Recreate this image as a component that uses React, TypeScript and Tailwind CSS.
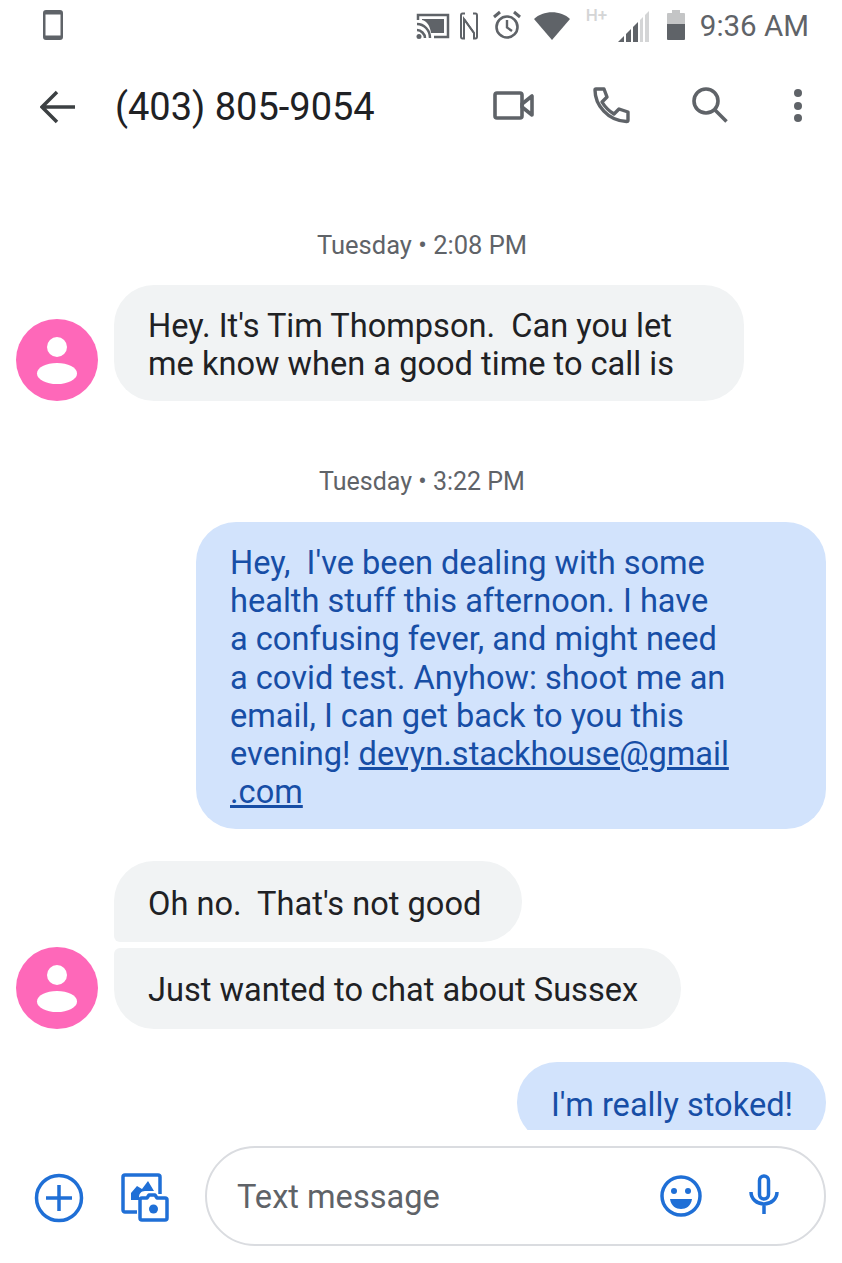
import React from "react";

const Avatar = () => (
  <svg width="82" height="82" viewBox="0 0 82 82" className="shrink-0">
    <circle cx="41" cy="41" r="41" fill="#fe68b9" />
    <circle cx="41" cy="28" r="10" fill="#fff" />
    <ellipse cx="41" cy="54.500" rx="20" ry="10.500" fill="#fff" />
  </svg>
);

const Stamp = ({ children, cls }: { children: React.ReactNode; cls: string }) => (
  <div className={`shrink-0 leading-[30px] text-[#5f6368] whitespace-pre ${cls}`}>{children}</div>
);

export default function App() {
  return (
    <div className="w-[842px] h-[1263px] bg-white flex flex-col overflow-hidden font-['Roboto',sans-serif]">
      {/* Status bar */}
      <div className="h-[50px] shrink-0 flex items-center pl-[43px] pr-[33px] text-[#5f6368]">
        <svg width="20" height="30" viewBox="0 0 20 30">
          <path fillRule="evenodd" d="M3 0h14a3 3 0 0 1 3 3v24a3 3 0 0 1-3 3H3a3 3 0 0 1-3-3V3a3 3 0 0 1 3-3zM2.500 4.500v21h15v-21z" fill="#5f6368" />
        </svg>
        <div className="flex-1" />
        <svg width="34" height="26" viewBox="0 0 34 26" className="mr-[10px] mt-[1px]" fill="none">
          <path d="M2 7V2h30v22H18" stroke="#5f6368" strokeWidth="2.500" />
          <path d="M6 6h22v14H15C14 13 11 8 6 7z" fill="#5f6368" />
          <path d="M1 11c7 0 13 6 13 14M1 17c4 0 8 4 8 8" stroke="#5f6368" strokeWidth="2.500" />
          <circle cx="3" cy="23.500" r="2.500" fill="#5f6368" />
        </svg>
        <svg width="18" height="28" viewBox="0 0 18 28" className="mr-[14px] mt-[1px]" fill="none" stroke="#5f6368" strokeWidth="2">
          <path d="M5 1.500H2.500C1.500 1.500 1 2.500 1 3.500v21c0 1 .5 2 1.500 2H4V7l10 14" />
          <path d="M13 1.500h2.500c1 0 1.500 1 1.500 2v21c0 1-.5 2-1.500 2H14V21L4 7" />
        </svg>
        <svg width="30" height="30" viewBox="0 0 30 30" className="mr-[12px]" fill="none" stroke="#5f6368">
          <circle cx="15" cy="17" r="10.500" strokeWidth="2.600" />
          <path d="M15 10v7.500l5 3.500" strokeWidth="2.400" />
          <path d="M2 7l6-5M28 7l-6-5" strokeWidth="3" />
        </svg>
        <svg width="36" height="29" viewBox="0 0 36 29" className="mr-[16px]">
          <path d="M0 8C9-1 27-1 36 8L18 29z" fill="#5f6368" />
        </svg>
        <span className="text-[17px] leading-[18px] text-[#d4d5d6] font-medium w-[24px] self-start mt-[6px] mr-[8px] whitespace-pre">H+</span>
        <svg width="31" height="31" viewBox="0 0 31 31" className="mr-[18px] mt-[2px]">
          <path d="M0 31L6 25V31z" fill="#5f6368" />
          <path d="M8 23l5-5v13H8z" fill="#5f6368" />
          <path d="M15 16l5-5v20h-5z" fill="#5f6368" />
          <path d="M22 9l3-3v25h-3z" fill="#d4d5d6" />
          <path d="M27 4l4-4v31h-4z" fill="#d4d5d6" />
        </svg>
        <svg width="18" height="30" viewBox="0 0 18 30" className="mr-[15px] mt-[-1px]">
          <path d="M5 0h8v3h4a1 1 0 0 1 1 1v10H0V4a1 1 0 0 1 1-1h4z" fill="#c4c5c6" />
          <path d="M0 14h18v15a1 1 0 0 1-1 1H1a1 1 0 0 1-1-1z" fill="#5f6368" />
        </svg>
        <span className="text-[29.500px] leading-[34px] text-[#5f6368] mt-[1px] whitespace-pre">9:36 AM</span>
      </div>

      {/* App bar */}
      <div className="h-[110px] shrink-0 flex items-center pl-[40px]">
        <svg width="36" height="34" viewBox="0 0 36 34" fill="none" stroke="#3c4043" strokeWidth="3.500" className="mr-[39px] mt-[4px]">
          <path d="M35 17H3M17 2L2 17l15 15" />
        </svg>
        <span className="text-[38px] leading-[44px] text-[#202124] w-[378px] whitespace-pre mt-[4px]">(403) 805-9054</span>
        <svg width="41" height="29" viewBox="0 0 41 29" fill="none" stroke="#5f6368" strokeWidth="3.600" strokeLinejoin="round" className="mr-[59px]">
          <rect x="2" y="2" width="27" height="25" rx="2" />
          <path d="M29 13L39 5v19L29 16z" />
        </svg>
        <svg width="38" height="37" viewBox="0 0 38 37" fill="none" stroke="#5f6368" strokeWidth="3.400" strokeLinejoin="round" className="mr-[61px]">
          <path d="M2 3c0-.6.4-1 1-1h8l3 8-5 5c3 5 7 9 12 12l5-5 9 3v8c0 1-.5 1.500-1.500 1.500C15 34 2 18 2 3z" />
        </svg>
        <svg width="36" height="36" viewBox="0 0 36 36" fill="none" stroke="#5f6368" strokeWidth="3.600" className="mr-[66px]">
          <circle cx="14" cy="14" r="12" />
          <path d="M22.500 22.500l12 12" />
        </svg>
        <div className="flex flex-col gap-[4.500px] mt-[1px]">
          <span className="w-[8px] h-[8px] rounded-full bg-[#5f6368]" />
          <span className="w-[8px] h-[8px] rounded-full bg-[#5f6368]" />
          <span className="w-[8px] h-[8px] rounded-full bg-[#5f6368]" />
        </div>
      </div>

      {/* Messages */}
      <div className="h-[970px] shrink-0 overflow-hidden flex flex-col text-[32.600px] leading-[38.200px]">
        <Stamp cls="text-[25.500px] mt-[70px] ml-[317px]">Tuesday • 2:08 PM</Stamp>
        <div className="shrink-0 flex items-end mt-[25px] pl-[16px] gap-[16px]">
          <Avatar />
          <div className="w-[630px] h-[116px] bg-[#f1f3f4] rounded-[40px] pl-[34px] pt-[22px] text-[#202124] whitespace-pre">
            <div>{"Hey. It's Tim Thompson.  Can you let"}</div>
            <div>me know when a good time to call is</div>
          </div>
        </div>

        <Stamp cls="text-[25px] mt-[66px] ml-[319px]">Tuesday • 3:22 PM</Stamp>
        <div className="shrink-0 self-end mr-[16px] mt-[25px] w-[630px] h-[307px] bg-[#d2e3fc] rounded-[40px] pl-[34px] pt-[22px] text-[#174ea6] whitespace-pre">
          <div>{"Hey,  I've been dealing with some"}</div>
          <div>health stuff this afternoon. I have</div>
          <div>a confusing fever, and might need</div>
          <div>a covid test. Anyhow: shoot me an</div>
          <div>email, I can get back to you this</div>
          <div className="flex">
            <span>{"evening! "}</span>
            <span className="underline">devyn.stackhouse@gmail</span>
          </div>
          <div className="underline">.com</div>
        </div>

        <div className="shrink-0 ml-[114px] mt-[32px] w-[408px] h-[81px] bg-[#f1f3f4] rounded-[40px] rounded-bl-[6px] pl-[34px] pt-[24px] text-[#202124] whitespace-pre">
          {"Oh no.  That's not good"}
        </div>
        <div className="shrink-0 flex items-end mt-[5px] pl-[16px] gap-[16px]">
          <Avatar />
          <div className="w-[567px] h-[81px] bg-[#f1f3f4] rounded-[40px] rounded-tl-[6px] pl-[34px] pt-[23px] text-[#202124] whitespace-pre">
            Just wanted to chat about Sussex
          </div>
        </div>

        <div className="self-end mr-[16px] mt-[33px] w-[309px] h-[81px] shrink-0 bg-[#d2e3fc] rounded-[40px] pl-[34px] pt-[24px] text-[#174ea6] whitespace-pre">
          I'm really stoked!
        </div>
      </div>

      {/* Composer */}
      <div className="flex-1 flex items-start pl-[34px] pt-[16px]">
        <svg width="50" height="50" viewBox="0 0 50 50" fill="none" stroke="#1f6fd6" strokeWidth="3.500" className="mt-[27px] mr-[37px]">
          <circle cx="25" cy="25" r="22.500" />
          <path d="M25 12v26M12 25h26" />
        </svg>
        <svg width="50" height="50" viewBox="0 0 50 50" className="mt-[27px] mr-[34px]">
          <path d="M16 39H4a2 2 0 0 1-2-2V4a2 2 0 0 1 2-2h33a2 2 0 0 1 2 2v17" fill="none" stroke="#1f6fd6" strokeWidth="3.500" />
          <path d="M10 27v-7l6-7 5 3 6-8 6 10H24c-4 0-6 3-6 6v3z" fill="#1f6fd6" />
          <path d="M21 25h5l2-3h6l2 3h8a2 2 0 0 1 2 2v18a2 2 0 0 1-2 2H21a2 2 0 0 1-2-2V27a2 2 0 0 1 2-2z" fill="#fff" stroke="#1f6fd6" strokeWidth="3.500" strokeLinejoin="round" />
          <circle cx="32.500" cy="36" r="4.500" fill="#1f6fd6" />
        </svg>
        <div className="w-[621px] h-[100px] border-2 border-[#dadce0] rounded-[50px] flex items-center pl-[30px]">
          <span className="text-[32.600px] leading-[38px] text-[#5f6368] w-[423px] mt-[2px] whitespace-pre">Text message</span>
          <svg width="42" height="42" viewBox="0 0 42 42" fill="none" className="mr-[47px]">
            <circle cx="21" cy="21" r="19" stroke="#1f6fd6" strokeWidth="3.500" />
            <circle cx="14" cy="16" r="3" fill="#1f6fd6" />
            <circle cx="28" cy="16" r="3" fill="#1f6fd6" />
            <path d="M10 24h22c-1 7-6 10-11 10s-10-3-11-10z" fill="#1f6fd6" />
          </svg>
          <svg width="30" height="40" viewBox="0 0 30 40" fill="none" className="mt-[-5px]">
            <rect x="10.500" y="2" width="9" height="23" rx="4.500" stroke="#1f6fd6" strokeWidth="3.500" />
            <path d="M2 18c0 7 6 12 13 12s13-5 13-12M15 30v10" stroke="#1f6fd6" strokeWidth="3.500" />
          </svg>
        </div>
      </div>
    </div>
  );
}
